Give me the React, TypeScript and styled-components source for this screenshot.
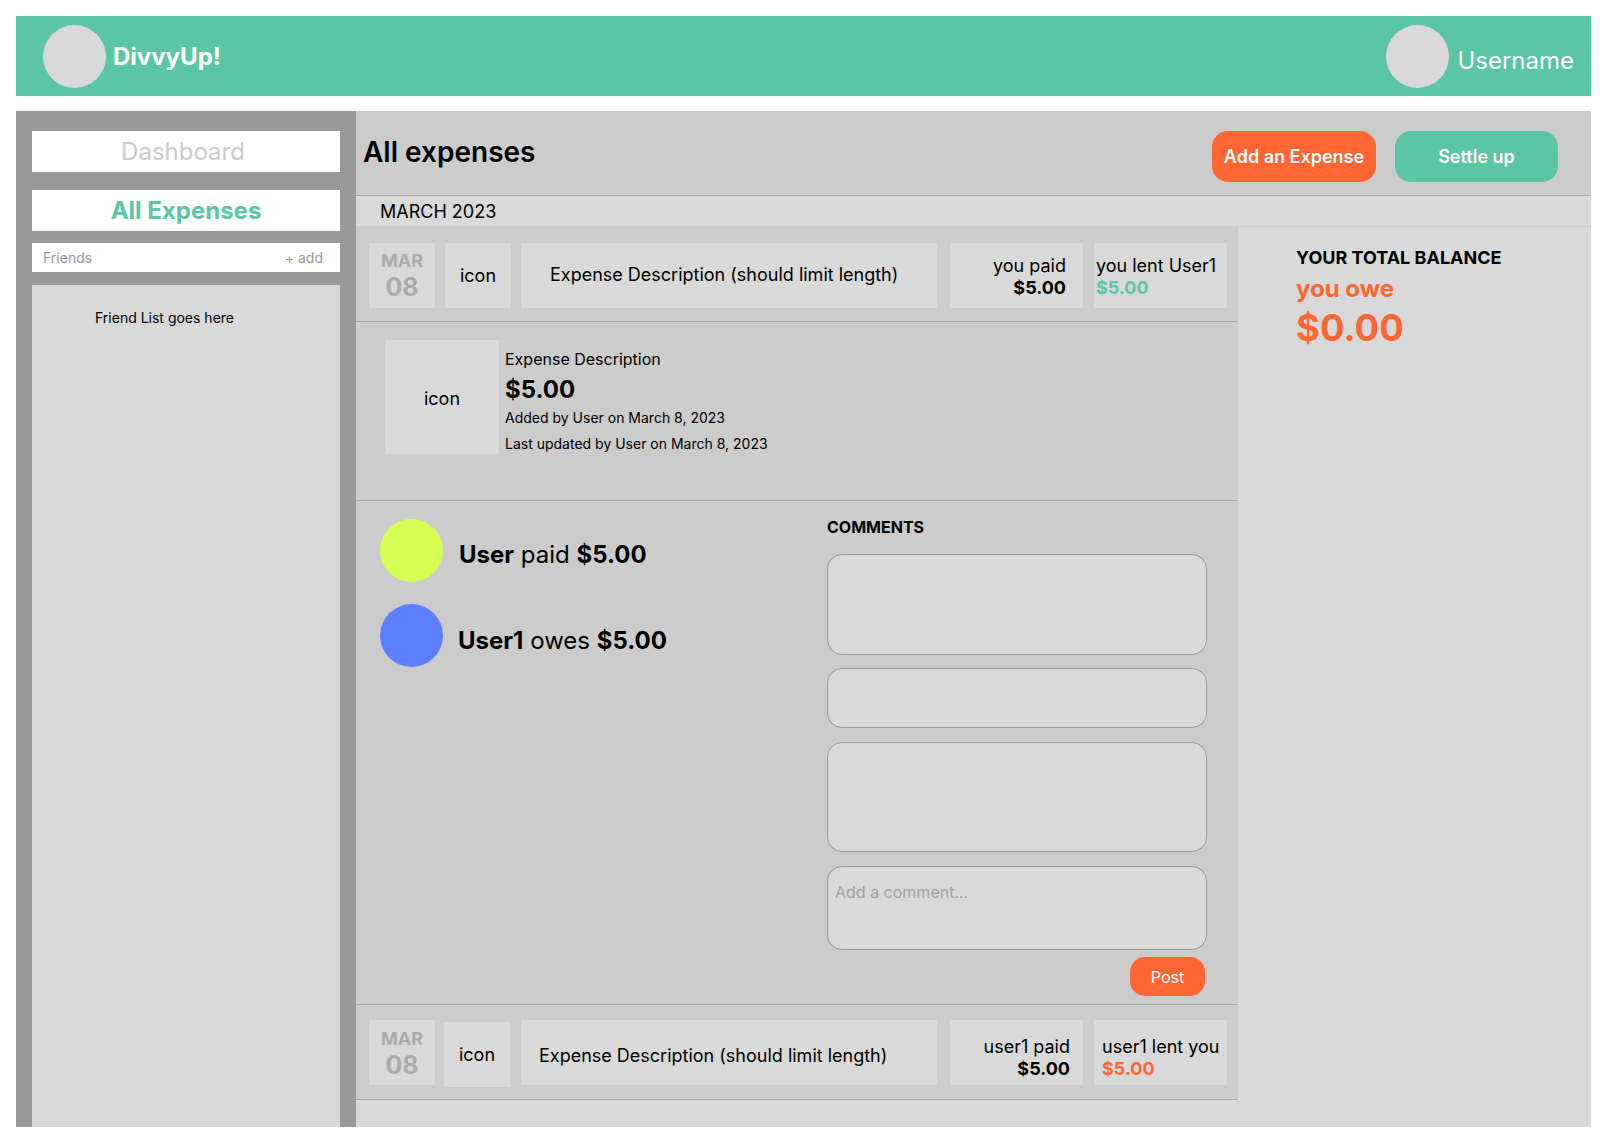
import React from "react";
import styled, { createGlobalStyle } from "styled-components";

const GREEN = "#5bc6a6";
const ORANGE = "#ff6633";
const PANEL = "#d9d9d9";
const MID = "#cccccc";
const DARK = "#999999";

const Global = createGlobalStyle`
  html, body { margin: 0; padding: 0; background: #fff; }
  * { box-sizing: border-box; }
  body { font-family: Inter, "Noto Sans", sans-serif; color: #000; }
`;

const Page = styled.div`
  width: 1575px;
  margin: 16px 0 15px 16px;
  display: flex;
  flex-direction: column;
  gap: 15px;
`;

const TopBar = styled.header`
  height: 80px;
  background: ${GREEN};
  display: flex;
  align-items: center;
  justify-content: space-between;
  padding: 0 17px 0 27px;
`;

const Brand = styled.div<{ $gap: number }>`
  display: flex;
  align-items: center;
  gap: ${(p) => p.$gap}px;
`;

const BrandName = styled.span`
  color: #fff;
  font-size: 24px;
  font-weight: 700;
  line-height: 29px;
`;

const Avatar = styled.div`
  width: 63px;
  height: 63px;
  border-radius: 50%;
  background: ${PANEL};
`;

const UserName = styled.span`
  color: #fff;
  font-size: 24px;
  line-height: 29px;
  margin-top: 9px;
`;

const Main = styled.main`
  height: 1016px;
  display: flex;
`;

const Sidebar = styled.aside`
  width: 340px;
  background: ${DARK};
  padding: 20px 16px 0;
  display: flex;
  flex-direction: column;
`;

const NavItem = styled.div<{ $active?: boolean }>`
  height: 41px;
  margin-bottom: ${(p) => (p.$active ? 12 : 18)}px;
  background: #fff;
  display: flex;
  align-items: center;
  justify-content: center;
  font-size: 24px;
  line-height: 29px;
  padding-right: ${(p) => (p.$active ? 0 : 6)}px;
  color: ${(p) => (p.$active ? GREEN : MID)};
  font-weight: ${(p) => (p.$active ? 700 : 400)};
`;

const FriendsBar = styled.div`
  height: 29px;
  background: #fff;
  display: flex;
  align-items: center;
  justify-content: space-between;
  padding: 0 17px 0 11px;
  font-size: 14px;
  color: ${DARK};
`;

const FriendList = styled.div`
  flex: 1;
  margin-top: 13px;
  background: ${PANEL};
  padding: 24px 0 0 63px;
  font-size: 14px;
  line-height: 17px;
`;

const Content = styled.section`
  flex: 1;
  min-width: 0;
  background: ${PANEL};
  display: flex;
  flex-direction: column;
`;

const TitleBar = styled.div`
  height: 85px;
  flex: none;
  background: ${MID};
  border-bottom: 1px solid #a6a6a6;
  display: flex;
  align-items: flex-start;
  padding: 20px 33px 0 7px;
`;

const Title = styled.h1`
  margin: 4px auto 0 0;
  font-size: 28px;
  line-height: 34px;
  font-weight: 600;
`;

const ActionButton = styled.button<{ $bg: string; $w: number }>`
  width: ${(p) => p.$w}px;
  height: 51px;
  margin-left: 19px;
  border: 0;
  border-radius: 16px;
  background: ${(p) => p.$bg};
  color: #fff;
  font: 600 18px/22px Inter, sans-serif;
  padding: 1px 0 0;
`;

const MonthBar = styled.div`
  height: 30px;
  flex: none;
  padding: 1px 0 0 24px;
  font-size: 18px;
  line-height: 30px;
`;

const Body = styled.div`
  flex: 1;
  display: flex;
`;

const ExpenseColumn = styled.div`
  width: 882px;
  flex: none;
  display: flex;
  flex-direction: column;
`;

const ExpenseRow = styled.div<{ $h: number; $top: number }>`
  height: ${(p) => p.$h}px;
  padding: ${(p) => p.$top}px 0 0 13px;
  background: ${MID};
  border-bottom: 1px solid #a6a6a6;
  display: flex;
  align-items: flex-start;
  gap: 10px;
`;

const Cell = styled.div`
  height: 65px;
  background: ${PANEL};
  flex: none;
`;

const DateCell = styled(Cell)<{ $top: number }>`
  width: 66px;
  display: flex;
  flex-direction: column;
  align-items: center;
  color: #ababab;
  padding-top: ${(p) => p.$top}px;
`;

const DateMonth = styled.span`
  font-size: 18px;
  line-height: 22px;
  font-weight: 700;
`;

const DateDay = styled.span`
  font-size: 25px;
  line-height: 30px;
  font-weight: 700;
`;

const IconCell = styled(Cell)<{ $shift?: boolean }>`
  width: 66px;
  display: flex;
  align-items: center;
  justify-content: center;
  font-size: 18px;
  margin: ${(p) => (p.$shift ? "2px 1px 0 -1px" : "0")};
`;

const DescCell = styled(Cell)<{ $pad: number; $drop: number; $lift: number }>`
  width: 416px;
  display: flex;
  align-items: center;
  padding: ${(p) => p.$drop}px 0 ${(p) => p.$lift}px ${(p) => p.$pad}px;
  font-size: 18px;
`;

const AmountCell = styled(Cell)<{ $right?: boolean; $pad: number; $gap: number; $top: number }>`
  width: 133px;
  margin-left: ${(p) => p.$gap}px;
  padding: ${(p) => p.$top}px ${(p) => (p.$right ? p.$pad : 0)}px 0 ${(p) => (p.$right ? 0 : p.$pad)}px;
  display: flex;
  flex-direction: column;
  align-items: ${(p) => (p.$right ? "flex-end" : "flex-start")};
  font-size: 18px;
  line-height: 22px;
  white-space: nowrap;
`;

const Amount = styled.span<{ $color?: string }>`
  font-weight: 700;
  color: ${(p) => p.$color || "#000"};
`;

const Detail = styled.div`
  height: 179px;
  flex: none;
  background: ${MID};
  border-bottom: 1px solid #a6a6a6;
  padding: 18px 0 0 29px;
  display: flex;
  align-items: flex-start;
  gap: 6px;
`;

const DetailIcon = styled.div`
  width: 114px;
  height: 114px;
  background: ${PANEL};
  display: flex;
  align-items: center;
  justify-content: center;
  font-size: 18px;
  padding-top: 2px;
`;

const DetailInfo = styled.div`
  display: flex;
  flex-direction: column;
  padding-top: 9px;
`;

const DetailTitle = styled.span`
  font-size: 16px;
  line-height: 20px;
`;

const DetailAmount = styled.span`
  font-size: 24px;
  line-height: 32px;
  font-weight: 700;
  margin: 5px 0 -1px;
`;

const DetailMeta = styled.span`
  font-size: 14px;
  line-height: 26px;
`;

const Split = styled.div`
  height: 504px;
  flex: none;
  background: ${MID};
  border-bottom: 1px solid #a6a6a6;
  display: flex;
  padding: 18px 31px 0 24px;
`;

const People = styled.div`
  width: 447px;
  flex: none;
  display: flex;
  flex-direction: column;
  gap: 22px;
`;

const Person = styled.div<{ $gap: number; $drop: number }>`
  display: flex;
  align-items: center;
  gap: ${(p) => p.$gap}px;
  font-size: 24px;
  line-height: 29px;
  & > span { margin-top: ${(p) => p.$drop}px; }
  & b { font-weight: 700; }
`;

const Dot = styled.div<{ $color: string }>`
  width: 63px;
  height: 63px;
  border-radius: 50%;
  background: ${(p) => p.$color};
  flex: none;
`;

const Comments = styled.div`
  flex: 1;
  display: flex;
  flex-direction: column;
  align-items: flex-start;
`;

const CommentsTitle = styled.h2`
  margin: -1px 0 17px;
  font-size: 16px;
  line-height: 19px;
  font-weight: 700;
`;

const CommentBox = styled.div<{ $h: number; $gap: number }>`
  width: 380px;
  height: ${(p) => p.$h}px;
  margin-bottom: ${(p) => p.$gap}px;
  background: ${PANEL};
  border: 1px solid #999;
  border-radius: 15px;
`;

const CommentInput = styled.div`
  width: 380px;
  height: 84px;
  background: ${PANEL};
  border: 1px solid #999;
  border-radius: 15px;
  padding: 15px 7px;
  font-size: 16px;
  line-height: 20px;
  color: #a3a3a3;
`;

const PostButton = styled.button`
  width: 75px;
  height: 39px;
  margin: 7px 0 0 303px;
  border: 0;
  border-radius: 15px;
  background: ${ORANGE};
  color: #fff;
  font: 400 16px/20px Inter, sans-serif;
  padding: 0;
`;

const BalancePanel = styled.aside`
  flex: 1;
  border-top: 1px solid ${MID};
  padding: 20px 0 0 58px;
  display: flex;
  flex-direction: column;
`;

const BalanceLabel = styled.span`
  font-size: 18px;
  line-height: 22px;
  font-weight: 700;
`;

const BalanceOwe = styled.span`
  margin-top: 5px;
  font-size: 24px;
  line-height: 29px;
  font-weight: 700;
  color: ${ORANGE};
`;

const BalanceTotal = styled.span`
  margin-top: 1px;
  font-size: 36.5px;
  line-height: 48px;
  font-weight: 700;
  color: ${ORANGE};
`;

export default function App() {
  return (
    <>
      <Global />
      <Page>
        <TopBar>
          <Brand $gap={7}>
            <Avatar />
            <BrandName>DivvyUp!</BrandName>
          </Brand>
          <Brand $gap={8}>
            <Avatar />
            <UserName>Username</UserName>
          </Brand>
        </TopBar>
        <Main>
          <Sidebar>
            <NavItem>Dashboard</NavItem>
            <NavItem $active>All Expenses</NavItem>
            <FriendsBar>
              <span>Friends</span>
              <span>+ add</span>
            </FriendsBar>
            <FriendList>Friend List goes here</FriendList>
          </Sidebar>
          <Content>
            <TitleBar>
              <Title>All expenses</Title>
              <ActionButton $bg={ORANGE} $w={164}>Add an Expense</ActionButton>
              <ActionButton $bg={GREEN} $w={163}>Settle up</ActionButton>
            </TitleBar>
            <MonthBar>MARCH 2023</MonthBar>
            <Body>
              <ExpenseColumn>
                <ExpenseRow $h={96} $top={17}>
                  <DateCell $top={7}>
                    <DateMonth>MAR</DateMonth>
                    <DateDay>08</DateDay>
                  </DateCell>
                  <IconCell>icon</IconCell>
                  <DescCell $pad={29} $drop={0} $lift={3}>Expense Description (should limit length)</DescCell>
                  <AmountCell $right $pad={17} $gap={3} $top={12}>
                    <span>you paid</span>
                    <Amount>$5.00</Amount>
                  </AmountCell>
                  <AmountCell $pad={2} $gap={1} $top={12}>
                    <span>you lent User1</span>
                    <Amount $color={GREEN}>$5.00</Amount>
                  </AmountCell>
                </ExpenseRow>
                <Detail>
                  <DetailIcon>icon</DetailIcon>
                  <DetailInfo>
                    <DetailTitle>Expense Description</DetailTitle>
                    <DetailAmount>$5.00</DetailAmount>
                    <DetailMeta>Added by User on March 8, 2023</DetailMeta>
                    <DetailMeta>Last updated by User on March 8, 2023</DetailMeta>
                  </DetailInfo>
                </Detail>
                <Split>
                  <People>
                    <Person $gap={16} $drop={8}>
                      <Dot $color="#d4ff52" />
                      <span><b>User</b> paid <b>$5.00</b></span>
                    </Person>
                    <Person $gap={15} $drop={9}>
                      <Dot $color="#5c80ff" />
                      <span><b>User1</b> owes <b>$5.00</b></span>
                    </Person>
                  </People>
                  <Comments>
                    <CommentsTitle>COMMENTS</CommentsTitle>
                    <CommentBox $h={101} $gap={13} />
                    <CommentBox $h={60} $gap={14} />
                    <CommentBox $h={110} $gap={14} />
                    <CommentInput>Add a comment...</CommentInput>
                    <PostButton>Post</PostButton>
                  </Comments>
                </Split>
                <ExpenseRow $h={95} $top={15}>
                  <DateCell $top={8}>
                    <DateMonth>MAR</DateMonth>
                    <DateDay>08</DateDay>
                  </DateCell>
                  <IconCell $shift>icon</IconCell>
                  <DescCell $pad={18} $drop={6} $lift={0}>Expense Description (should limit length)</DescCell>
                  <AmountCell $right $pad={13} $gap={3} $top={16}>
                    <span>user1 paid</span>
                    <Amount>$5.00</Amount>
                  </AmountCell>
                  <AmountCell $pad={8} $gap={1} $top={16}>
                    <span>user1 lent you</span>
                    <Amount $color={ORANGE}>$5.00</Amount>
                  </AmountCell>
                </ExpenseRow>
              </ExpenseColumn>
              <BalancePanel>
                <BalanceLabel>YOUR TOTAL BALANCE</BalanceLabel>
                <BalanceOwe>you owe</BalanceOwe>
                <BalanceTotal>$0.00</BalanceTotal>
              </BalancePanel>
            </Body>
          </Content>
        </Main>
      </Page>
    </>
  );
}
